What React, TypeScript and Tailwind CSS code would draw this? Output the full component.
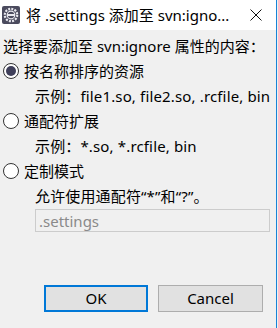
import { useState } from 'react';

// Eclipse-style "add to svn:ignore" dialog
function AppIcon() {
  return (
    <svg width="18" height="18" viewBox="0 0 18 18">
      <rect x="0" y="0" width="18" height="18" rx="2" fill="#4b4b5e" />
      <circle cx="9" cy="9" r="6.2" fill="none" stroke="#e8e8ee" strokeWidth="2.2" strokeDasharray="2 1.2" />
      <circle cx="9" cy="9" r="4.4" fill="#e8e8ee" />
      <circle cx="9" cy="9" r="3.2" fill="#4b4b5e" />
      <rect x="5" y="8" width="8" height="2" fill="#e8e8ee" />
    </svg>
  );
}

function Radio({ checked }: { checked: boolean }) {
  return (
    <span className="w-[16px] h-[16px] rounded-full border border-[#333] bg-white flex items-center justify-center shrink-0">
      {checked && <span className="w-[10px] h-[10px] rounded-full bg-[#3f3f5a]" />}
    </span>
  );
}

export default function App() {
  const [mode, setMode] = useState(0);
  const options = [
    { label: '按名称排序的资源', hint: '示例：file1.so, file2.so, .rcfile, bin' },
    { label: '通配符扩展', hint: '示例：*.so, *.rcfile, bin' },
    { label: '定制模式', hint: '允许使用通配符“*”和“?”。' },
  ];

  return (
    <div className="w-[278px] h-[328px] bg-[#f0f0f0] font-['Noto_Sans','Noto_Sans_CJK_SC',sans-serif] text-[15px] text-black">
      <div className="w-[277px] h-full border-r border-[#1883d7] flex flex-col">
        {/* Title bar */}
        <div className="h-[30px] bg-white flex items-center pl-[2px] pr-[14px]">
          <AppIcon />
          <span className="ml-[6px] flex-1 whitespace-nowrap">将 .settings 添加至 svn:igno...</span>
          <svg width="12" height="12" viewBox="0 0 12 12">
            <path d="M0.5 0.5 L11.5 11.5 M11.5 0.5 L0.5 11.5" stroke="#111" strokeWidth="1" />
          </svg>
        </div>

        {/* Body */}
        <div className="flex-1 flex flex-col pl-[3px] pt-[3px]">
          <div className="h-[26px] flex items-center whitespace-nowrap">选择要添加至 svn:ignore 属性的内容：</div>
          {options.map((o, i) => (
            <div key={i}>
              <label className="h-[24px] flex items-center gap-[5px] cursor-pointer" onClick={() => setMode(i)}>
                <Radio checked={mode === i} />
                <span>{o.label}</span>
              </label>
              <div className="h-[26px] flex items-center pl-[32px] whitespace-nowrap tracking-[0.15px]">{o.hint}</div>
            </div>
          ))}
          <div className="pl-[32px] pr-[6px]">
            <input
              disabled
              value=".settings"
              readOnly
              className="w-full h-[23px] border border-[#cccccc] bg-[#f0f0f0] px-[3px] text-[#8a8a8a]"
            />
          </div>

          <div className="mt-auto mb-[16px] flex justify-end gap-[10px] pr-[13px]">
            <button className="w-[104px] h-[27px] bg-[#e1e1e1] border-2 border-[#0078d7]">OK</button>
            <button className="w-[105px] h-[27px] bg-[#e1e1e1] border border-[#adadad]">Cancel</button>
          </div>
        </div>
      </div>
    </div>
  );
}
